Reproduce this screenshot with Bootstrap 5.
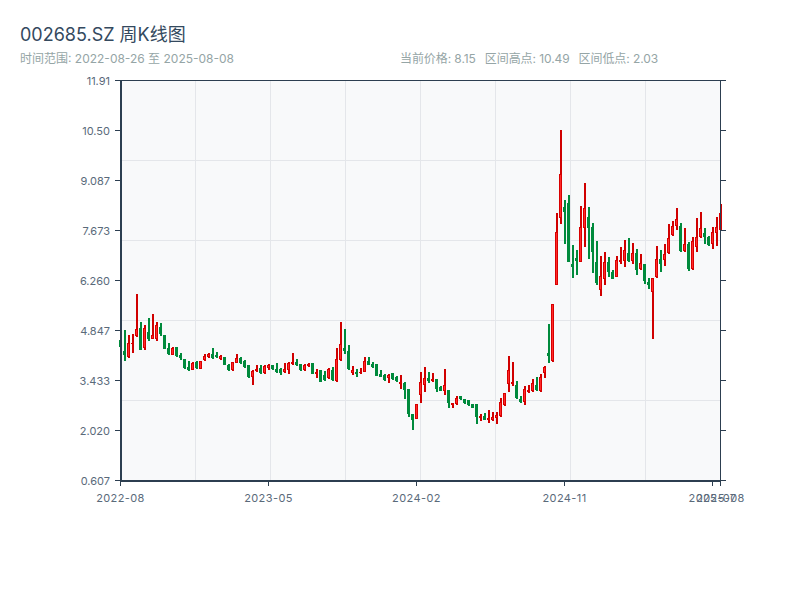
<!DOCTYPE html>
<html lang="zh-CN">
<head>
<meta charset="utf-8">
<title>002685.SZ 周K线图</title>
<link href="https://cdn.jsdelivr.net/npm/bootstrap@5.3.0/dist/css/bootstrap.min.css" rel="stylesheet">
<style>
body{background:#fff;font-family:Inter,"Noto Sans CJK SC",sans-serif;}
.page-wrap{padding:21px 20px 0;}
.chart-title{font-size:18px;line-height:28px;font-weight:400;color:#34495e;margin:0;}
.chart-sub{font-size:12px;line-height:18px;color:#95a5a6;margin-top:1px;}
.stat-gap{gap:9px;letter-spacing:-.08px;}
.chart-svg{display:block;margin-top:2px;}
.plot-bg{fill:#f8f9fa;}
.grid-line{stroke:#e4e6ea;stroke-width:1;shape-rendering:crispEdges;}
.axis-line{stroke:#2c3e50;stroke-width:1;shape-rendering:crispEdges;}
.axis-thick{stroke:#2c3e50;stroke-width:2;shape-rendering:crispEdges;}
.tick-label{font-family:Inter,"Noto Sans CJK SC",sans-serif;font-size:11px;fill:#5a6a7a;}
.tick-x{letter-spacing:.4px;}
.wick-up{fill:#d00000;}
.wick-down{fill:#008a3c;}
.body-up{fill:#d80000;}
.core-up{fill:#ff2a2a;}
.body-down{fill:#008a3c;}
</style>
</head>
<body>
<div class="page-wrap">
  <h1 class="chart-title">002685.SZ 周K线图</h1>
  <div class="row g-0 chart-sub">
    <div class="col-6">时间范围: 2022-08-26 至 2025-08-08</div>
    <div class="col-6 d-flex stat-gap">
      <span>当前价格: 8.15</span><span>区间高点: 10.49</span><span>区间低点: 2.03</span>
    </div>
  </div>
  <svg class="chart-svg" id="kchart" width="760" height="440" viewBox="20 70 760 440" xmlns="http://www.w3.org/2000/svg">
    <rect class="plot-bg" x="121" y="81" width="600" height="400"></rect>
    <g id="grid"></g>
    <g id="candles"></g>
    <g id="axes"></g>
    <g id="labels"></g>
  </svg>
</div>
<script src="https://cdn.jsdelivr.net/npm/bootstrap@5.3.0/dist/js/bootstrap.bundle.min.js"></script>
<script>
(function(){
var NS='http://www.w3.org/2000/svg';
function el(parent,tag,attrs,text){var e=document.createElementNS(NS,tag);for(var k in attrs)e.setAttribute(k,attrs[k]);if(text!==undefined)e.textContent=text;document.getElementById(parent).appendChild(e);return e;}
[195,270,345,420,495,570,645].forEach(function(x){el('grid','line',{'class':'grid-line',x1:x+.5,x2:x+.5,y1:81,y2:481});});
[160,240,320,400].forEach(function(y){el('grid','line',{'class':'grid-line',x1:121,x2:721,y1:y+.5,y2:y+.5});});
// up: 1 = red, 0 = green; wick top, wick bottom, body top, body bottom (in groups by vertical origin, thirds of a pixel)
var groups=[
[280,[[0,180,200,180,200],[0,150,242,213,225],[1,165,233,190,230],[1,163,218,188,193],[1,42,170,148,167],[0,126,209,145,209],[1,135,209,145,205],[0,114,182,155,177],[1,102,176,165,176],[1,126,182,135,178],[0,129,168,140,163],[0,165,206,165,206],[0,189,225,205,222],[1,201,226,204,224],[0,201,231,201,228],[0,219,239,225,235],[0,236,266,236,263],[0,243,272,261,269],[1,247,269,250,269],[0,243,266,246,264],[1,243,266,244,266],[1,222,242,229,240],[1,219,233,222,231],[0,204,237,222,233],[0,216,234,225,232],[1,225,240,229,236],[0,231,255,231,255],[0,252,273,255,270],[1,246,273,246,270]]],
[310,[[1,132,159,144,158],[0,141,162,144,159],[0,150,174,153,171],[0,165,204,165,201],[1,180,225,183,201],[1,165,186,177,183],[0,165,192,174,189],[1,165,192,168,189],[1,162,180,165,174],[0,165,180,165,177],[0,159,189,177,186],[0,174,195,177,189],[1,159,189,177,186],[1,156,192,159,179],[1,129,165,156,162],[0,147,168,156,165],[0,162,183,162,180],[1,162,183,165,180],[1,159,171,162,168],[0,159,192,159,192],[1,177,204,186,192],[0,180,216,180,216],[0,183,213,195,210],[1,174,207,177,204],[0,171,213,180,210],[1,114,216,147,213],[1,36,153,102,150],[0,57,132,114,123],[0,105,180,123,177],[1,168,195,180,189]]],
[340,[[0,87,111,96,102],[1,84,102,96,99],[1,51,96,63,96],[0,51,75,63,75],[0,66,84,72,81],[0,72,108,72,108],[0,90,111,102,111],[0,102,123,105,120],[1,102,129,105,114],[0,99,120,99,117],[0,108,126,111,123],[1,105,147,126,131],[0,126,177,129,150],[0,147,231,147,222],[0,222,270,222,240],[1,192,237,192,237],[1,96,189,126,165],[1,81,156,114,135],[0,96,129,114,123],[1,99,126,117,123],[0,117,156,117,147],[0,138,153,141,153],[1,87,165,135,153],[0,150,204,150,189],[1,189,204,189,195],[1,168,195,174,192],[0,168,180,168,177],[0,177,192,177,189],[0,180,198,180,195],[0,192,204,192,204],[0,192,252,192,231],[1,222,243,228,234],[0,219,240,228,240],[1,210,249,234,240],[1,216,243,231,240],[1,216,252,225,234],[1,174,231,186,228],[1,159,198,159,195],[1,48,156,90,132],[1,66,138,126,132],[0,123,177,135,174],[0,168,189,177,186],[1,138,195,147,186],[1,135,159,150,156],[1,117,156,129,153],[0,111,153,135,150],[1,102,156,111,153],[1,78,114,81,99],[0,-48,69,39,48],[1,-108,66,-108,63]]],
[120,[[1,280,495,337,495],[1,30,312,162,294],[0,240,372,261,276],[0,225,426,249,426],[0,375,474,432,441],[0,390,465,414,423],[1,258,426,321,426],[1,189,381,264,324],[0,261,417,291,324],[0,309,459,321,396],[0,363,495,426,489],[1,408,528,468,510],[1,396,495,426,477],[0,411,471,426,456],[0,450,477,456,477],[1,408,471,420,471],[1,381,432,420,426],[1,360,441,390,423],[0,354,426,399,423]]],
[190,[[1,159,222,189,213],[0,177,255,189,240],[1,192,240,219,237],[0,222,282,222,273],[0,264,297,276,285],[1,264,447,264,306],[1,168,264,207,261],[0,180,246,207,222],[1,162,228,192,210],[1,102,192,144,189],[1,93,138,108,135],[1,54,120,87,108],[0,99,186,108,183],[1,114,186,162,183],[0,156,243,162,237],[1,141,240,153,237],[1,84,186,141,171],[1,66,144,114,141],[0,114,162,129,141],[0,138,168,141,165],[1,111,177,126,162],[1,81,168,111,129],[1,42,120,69,120]]]
];
var i=0;
groups.forEach(function(g){
  g[1].forEach(function(c){
    var wx=120+4*i,y0=g[0],up=c[0];
    var wt=Math.round(y0+c[1]/3),wb=Math.round(y0+c[2]/3),bt=Math.round(y0+c[3]/3),bb=Math.round(y0+c[4]/3);
    el('candles','rect',{'class':up?'wick-up':'wick-down',x:wx,y:wt,width:2,height:Math.max(wb-wt,1)});
    el('candles','rect',{'class':up?'body-up':'body-down',x:wx-1,y:bt,width:3,height:Math.max(bb-bt,1)});
    if(up&&bb-bt>2){el('candles','rect',{'class':'core-up',x:wx,y:bt+1,width:1,height:bb-bt-2});}
    i++;
  });
});
// axes
el('axes','line',{'class':'axis-line',x1:115,x2:726,y1:80.5,y2:80.5});
el('axes','line',{'class':'axis-thick',x1:121,x2:121,y1:80,y2:482});
el('axes','line',{'class':'axis-line',x1:720.5,x2:720.5,y1:80,y2:482});
el('axes','line',{'class':'axis-thick',x1:120,x2:721,y1:481,y2:481});
var yl=['11.91','10.50','9.087','7.673','6.260','4.847','3.433','2.020','0.607'];
yl.forEach(function(t,n){
  var y=80.5+50*n;
  el('axes','line',{'class':'axis-line',x1:115,x2:121,y1:y,y2:y});
  el('axes','line',{'class':'axis-line',x1:721,x2:726,y1:y,y2:y});
  el('labels','text',{'class':'tick-label',x:110,y:y+4,'text-anchor':'end'},t);
});
[[120.5,'2022-08'],[268.5,'2023-05'],[416.5,'2024-02'],[564.5,'2024-11'],[712.5,'2025-07'],[720.5,'2025-08']].forEach(function(d){
  el('axes','line',{'class':'axis-line',x1:d[0],x2:d[0],y1:482,y2:486});
  el('labels','text',{'class':'tick-label tick-x',x:d[0],y:502,'text-anchor':'middle'},d[1]);
});
})();
</script>
</body>
</html>
